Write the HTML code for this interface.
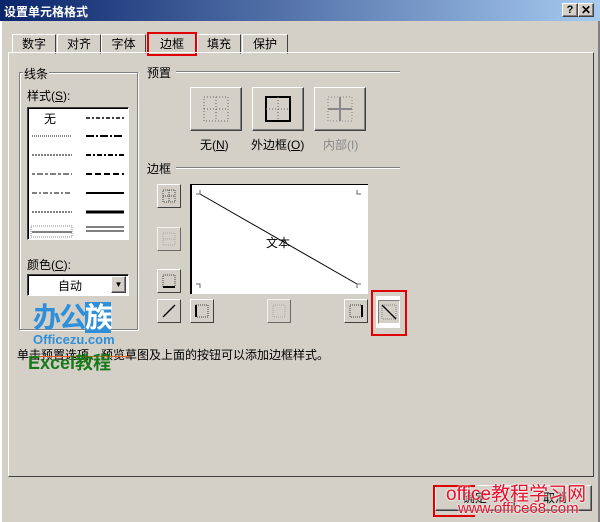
<html><head><style>
body{margin:0;width:600px;height:522px;background:#d4d0c8;font-family:"Liberation Sans","Noto Sans CJK SC",sans-serif;font-size:12px;position:relative;overflow:hidden;color:#000}
.a{position:absolute}
.btn{position:absolute;background:#d4d0c8;border:1px solid;border-color:#fff #404040 #404040 #fff;box-shadow:inset -1px -1px 0 #808080}
.grp{position:absolute;border:1px solid #808080;box-shadow:1px 1px 0 #fff inset,1px 1px 0 #fff}
.ln{position:absolute;height:1px;background:#808080;border-bottom:1px solid #fff}
.tab{position:absolute;top:34px;height:18px;border:1px solid;border-color:#fff #404040 transparent #fff;text-align:center;line-height:18px}
.sb{position:absolute;width:22px;height:22px;background:#d4d0c8;border:1px solid;border-color:#fff #404040 #404040 #fff}
</style></head><body>
<div class="a" style="left:0;top:0;width:600px;height:21px;background:linear-gradient(90deg,#0a246a,#a6caf0)"></div>
<div class="a" style="left:4px;top:3px;color:#fff;font-weight:bold;font-size:12px">设置单元格格式</div>
<div class="btn" style="left:562px;top:3px;width:14px;height:12px;font-size:11px;font-weight:bold;text-align:center;line-height:12px">?</div>
<div class="btn" style="left:578px;top:3px;width:14px;height:12px;font-size:12px;font-weight:bold;text-align:center;line-height:12px">✕</div>
<div class="a" style="left:0;top:21px;width:2px;height:501px;background:#fff"></div>
<div class="a" style="left:598px;top:21px;width:2px;height:501px;background:#808080"></div>
<div class="tab" style="left:12px;width:42px">数字</div>
<div class="tab" style="left:57px;width:42px">对齐</div>
<div class="tab" style="left:101px;width:43px">字体</div>
<div class="tab" style="left:147px;top:32px;height:20px;width:46px;line-height:20px;border:2px solid #e00000">边框</div>
<div class="tab" style="left:197px;width:42px">填充</div>
<div class="tab" style="left:242px;width:44px">保护</div>
<div class="a" style="left:8px;top:52px;width:584px;height:423px;border:1px solid;border-color:#fff #404040 #404040 #fff"></div>
<div class="grp" style="left:19px;top:72px;width:117px;height:256px"></div>
<div class="a" style="left:23px;top:65px;background:#d4d0c8;padding:0 1px">线条</div>
<div class="a" style="left:27px;top:87px">样式(<u>S</u>):</div>
<div class="a" style="left:27px;top:107px;width:100px;height:131px;background:#fff;border:1px solid;border-color:#404040 #fff #fff #404040;box-shadow:inset 1px 1px 0 #000"></div>
<div class="a" style="left:44px;top:110px">无</div>
<svg class="a" style="left:28px;top:108px" width="100" height="130">
<g stroke="#000" fill="none">
<line x1="4" y1="28" x2="44" y2="28" stroke-dasharray="1 1"/>
<line x1="4" y1="47" x2="44" y2="47" stroke-dasharray="2 1"/>
<line x1="4" y1="66" x2="44" y2="66" stroke-dasharray="3 2 6 2"/>
<line x1="4" y1="85" x2="44" y2="85" stroke-dasharray="5 2 2 2"/>
<line x1="4" y1="104" x2="44" y2="104" stroke-dasharray="2 1 2 1"/>
<line x1="4" y1="124" x2="44" y2="124"/>
<rect x="3" y="118" width="41" height="11" stroke="#888" stroke-dasharray="1 1"/>
<line x1="58" y1="10" x2="96" y2="10" stroke-width="1.5" stroke-dasharray="4 2 2 2"/>
<line x1="58" y1="28" x2="96" y2="28" stroke-width="2" stroke-dasharray="8 2 2 2"/>
<line x1="58" y1="47" x2="96" y2="47" stroke-width="2" stroke-dasharray="5 2 2 2"/>
<line x1="58" y1="66" x2="96" y2="66" stroke-width="2" stroke-dasharray="6 3"/>
<line x1="58" y1="85" x2="96" y2="85" stroke-width="2"/>
<line x1="58" y1="104" x2="96" y2="104" stroke-width="3"/>
<line x1="58" y1="119" x2="96" y2="119"/><line x1="58" y1="123" x2="96" y2="123"/>
</g></svg>
<div class="a" style="left:27px;top:256px">颜色(<u>C</u>):</div>
<div class="a" style="left:27px;top:274px;width:100px;height:20px;background:#fff;border:1px solid;border-color:#404040 #fff #fff #404040;box-shadow:inset 1px 1px 0 #000"></div>
<div class="a" style="left:58px;top:277px">自动</div>
<div class="btn" style="left:111px;top:276px;width:13px;height:15px;text-align:center;font-size:8px;line-height:15px">▼</div>
<div class="a" style="left:147px;top:64px">预置</div>
<div class="ln" style="left:176px;top:71px;width:224px"></div>
<div class="btn" style="left:190px;top:87px;width:50px;height:42px"></div>
<div class="btn" style="left:252px;top:87px;width:50px;height:42px"></div>
<div class="btn" style="left:314px;top:87px;width:50px;height:42px"></div>
<svg class="a" style="left:190px;top:87px" width="180" height="44"><g fill="none">
<rect x="14" y="10" width="24" height="24" stroke="#666" stroke-dasharray="1 2"/><line x1="26" y1="10" x2="26" y2="34" stroke="#666" stroke-dasharray="1 2"/><line x1="14" y1="22" x2="38" y2="22" stroke="#666" stroke-dasharray="1 2"/>
<rect x="76" y="10" width="24" height="24" stroke="#000" stroke-width="2"/><line x1="88" y1="10" x2="88" y2="34" stroke="#666" stroke-dasharray="1 2"/><line x1="76" y1="22" x2="100" y2="22" stroke="#666" stroke-dasharray="1 2"/>
<rect x="138" y="10" width="24" height="24" stroke="#888" stroke-dasharray="1 2"/><line x1="150" y1="10" x2="150" y2="34" stroke="#888" stroke-width="2"/><line x1="138" y1="22" x2="162" y2="22" stroke="#888" stroke-width="2"/>
</g></svg>
<div class="a" style="left:200px;top:136px">无(<u>N</u>)</div>
<div class="a" style="left:251px;top:136px">外边框(<u>O</u>)</div>
<div class="a" style="left:323px;top:136px;color:#888">内部(I)</div>
<div class="a" style="left:147px;top:160px">边框</div>
<div class="ln" style="left:176px;top:167px;width:224px"></div>
<div class="a" style="left:190px;top:184px;width:176px;height:109px;background:#fff;border-left:2px solid #000;border-top:1px solid #000"></div>
<svg class="a" style="left:190px;top:184px" width="180" height="112"><g stroke="#000" fill="none">
<line x1="10" y1="10" x2="167" y2="100"/>
<path d="M6 10h4v-4M167 6v4h4M10 104v-4h-4M171 100h-4v4" stroke="#666"/>
</g></svg>
<div class="a" style="left:266px;top:234px">文本</div>
<div class="sb" style="left:157px;top:184px"></div>
<div class="sb" style="left:157px;top:227px;opacity:.7"></div>
<div class="sb" style="left:157px;top:269px"></div>
<div class="sb" style="left:157px;top:299px"></div>
<div class="sb" style="left:190px;top:299px"></div>
<div class="sb" style="left:267px;top:299px;opacity:.7"></div>
<div class="sb" style="left:344px;top:299px"></div>
<div class="a" style="left:376px;top:296px;width:24px;height:32px;background:#fff"></div>
<div class="sb" style="left:378px;top:300px;width:20px;height:22px;border-color:#808080 #fff #fff #808080"></div>
<svg class="a" style="left:157px;top:184px" width="250" height="140"><g fill="none" stroke="#444" stroke-dasharray="1 1">
<rect x="6" y="6" width="12" height="12"/><line x1="12" y1="6" x2="12" y2="18"/><line x1="6" y1="12" x2="18" y2="12"/>
<rect x="6" y="49" width="12" height="12" stroke="#aaa"/><line x1="6" y1="55" x2="18" y2="55" stroke="#aaa"/>
<rect x="6" y="91" width="12" height="12"/><line x1="6" y1="103" x2="18" y2="103" stroke-dasharray="none" stroke="#000" stroke-width="2"/>
<rect x="39" y="121" width="12" height="12"/><line x1="39" y1="121" x2="39" y2="133" stroke-dasharray="none" stroke="#000" stroke-width="2"/>
<rect x="116" y="121" width="12" height="12" stroke="#aaa"/>
<rect x="193" y="121" width="12" height="12"/><line x1="205" y1="121" x2="205" y2="133" stroke-dasharray="none" stroke="#000" stroke-width="2"/>
<rect x="225" y="121" width="14" height="14" stroke="#888"/>
</g><g stroke="#000" stroke-width="1.3"><line x1="6" y1="133" x2="18" y2="121"/><line x1="225" y1="121" x2="239" y2="135"/></g></svg>
<div class="a" style="left:371px;top:290px;width:32px;height:42px;border:2px solid #e00000"></div>
<div class="a" style="left:17px;top:346px">单击预置选项、预览草图及上面的按钮可以添加边框样式。</div>
<div class="a" style="left:30px;top:356px;width:100px;height:1px;background:#e86020"></div>
<div class="a" style="left:33px;top:302px;font-size:28px;line-height:32px;font-weight:bold;color:#2f8fd8;letter-spacing:-2px">办公<span style="background:#2f8fd8;color:#fff">族</span></div>
<div class="a" style="left:33px;top:333px;font-size:13px;line-height:14px;font-weight:bold;color:#2f8fd8">Officezu.com</div>
<div class="a" style="left:28px;top:352px;font-size:18px;line-height:22px;font-weight:bold;color:#1a7a1a">Excel教程</div>
<div class="btn" style="left:435px;top:485px;width:78px;height:24px;text-align:center;line-height:24px">确定</div>
<div class="btn" style="left:518px;top:485px;width:72px;height:24px;text-align:center;line-height:24px">取消</div>
<div class="a" style="left:433px;top:485px;width:40px;height:28px;border:2px solid #e00000;border-right:none"></div>
<div class="a" style="left:446px;top:479px;font-size:19px;color:#e8102a;text-shadow:0 0 2px #fff,0 0 2px #fff">office教程学习网</div>
<div class="a" style="left:458px;top:500px;font-size:15px;color:#e8102a;text-shadow:0 0 2px #fff,0 0 2px #fff">www.office68.com</div>
</body></html>
